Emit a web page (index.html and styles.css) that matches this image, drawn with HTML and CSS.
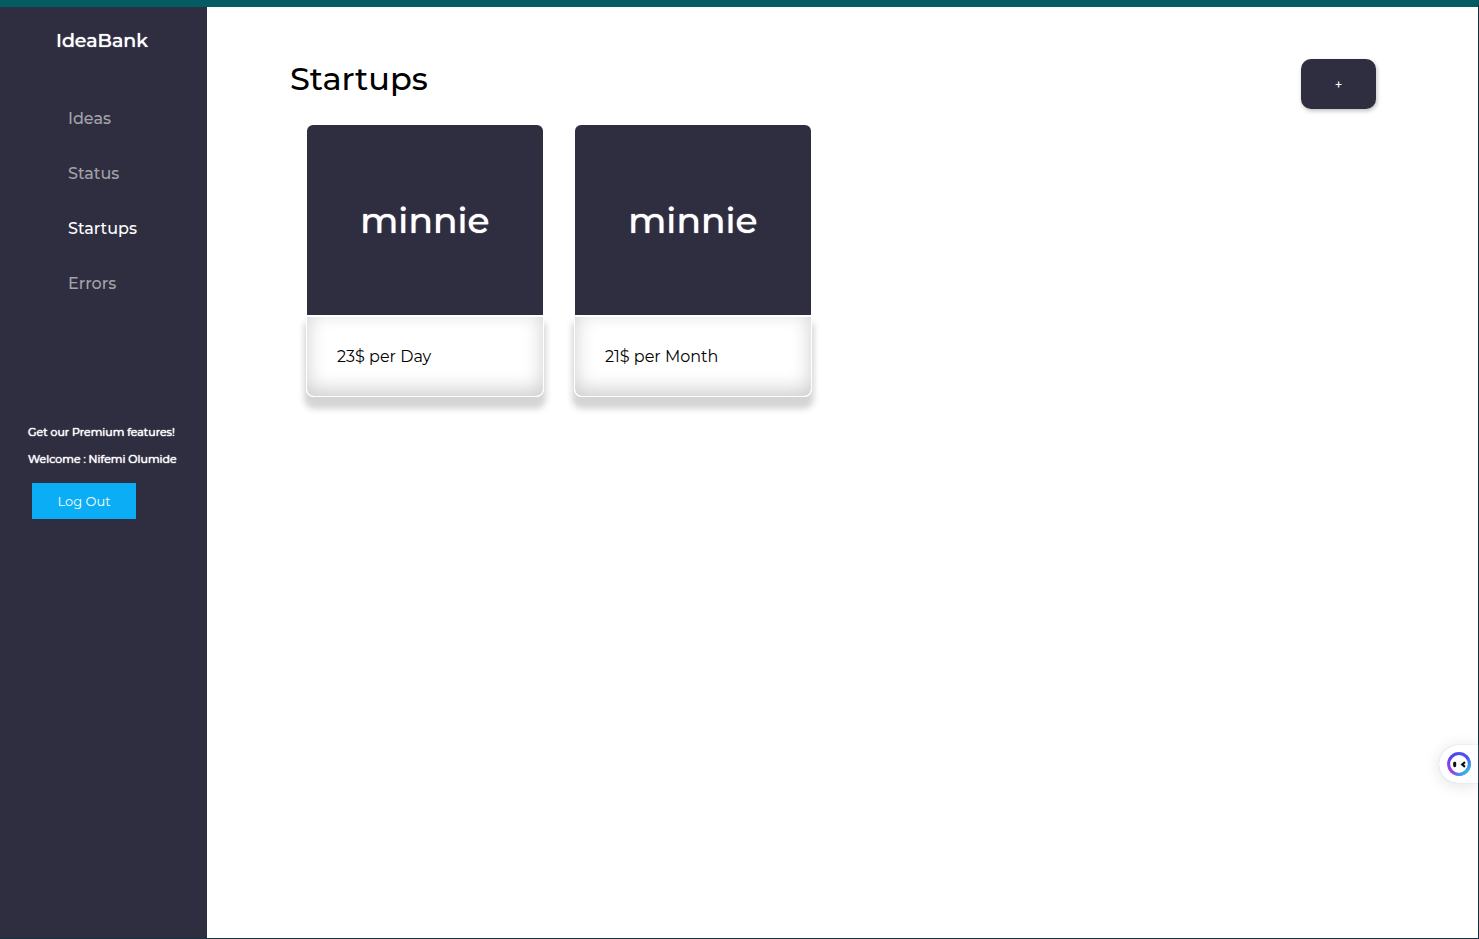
FILE: index.html
```html
<!DOCTYPE html>
<html lang="en">
<head>
    <meta charset="UTF-8">
    <meta name="viewport" content="width=device-width, initial-scale=1.0">
    <title>IdeaBank - Startups</title>
    <link rel="stylesheet" href="styles.css">
</head>
<body>
    <aside class="sidebar">
        <h2 class="logo">IdeaBank</h2>
        <nav class="menu">
            <a href="#ideas">Ideas</a>
            <a href="#status">Status</a>
            <a href="#startups" class="active">Startups</a>
            <a href="#errors">Errors</a>
        </nav>
        <div class="account">
            <p>Get our Premium features!</p>
            <p>Welcome : Nifemi Olumide</p>
            <button type="button" class="logout">Log Out</button>
        </div>
    </aside>

    <main class="content">
        <header class="content-header">
            <h1>Startups</h1>
            <button type="button" class="add">+</button>
        </header>

        <section class="cards">
            <article class="card">
                <div class="card-title">minnie</div>
                <div class="card-body">23$ per Day</div>
            </article>
            <article class="card">
                <div class="card-title">minnie</div>
                <div class="card-body">21$ per Month</div>
            </article>
        </section>
    </main>

    <button type="button" class="assistant" aria-label="Assistant">
        <svg width="24" height="24" viewBox="0 0 24 24">
            <defs>
                <linearGradient id="ring" x1="0.1" y1="0.9" x2="0.9" y2="0.3">
                    <stop offset="0" stop-color="#a03ee8"/>
                    <stop offset="0.5" stop-color="#4b45ee"/>
                    <stop offset="1" stop-color="#4a50f0"/>
                </linearGradient>
                <linearGradient id="glow" x1="0.4" y1="0.4" x2="0.9" y2="0.9">
                    <stop offset="0.3" stop-color="#2fc4e6" stop-opacity="0"/>
                    <stop offset="1" stop-color="#2fc4e6"/>
                </linearGradient>
            </defs>
            <circle cx="12" cy="12" r="10.4" fill="#fff" stroke="url(#ring)" stroke-width="3"/>
            <circle cx="12" cy="12" r="10.4" fill="none" stroke="url(#glow)" stroke-width="3"/>
            <rect x="6.2" y="9.8" width="3" height="5.4" rx="1.4" fill="#111"/>
            <path d="M18 10.2 L15.2 12.5 L18 14.8" fill="none" stroke="#111" stroke-width="2.2"/>
        </svg>
    </button>
</body>
</html>
```
FILE: styles.css
```css
* {
    box-sizing: border-box;
}
body {
    margin: 0;
    min-height: 100vh;
    display: flex;
    font-family: Montserrat, Inter, sans-serif;
    font-size: 16px;
    color: #000;
    background-color: #fff;
    border-top: 7px solid #045b62;
    border-right: 1px solid #17323f;
    border-bottom: 1px solid #17323f;
}
h1, h2, p {
    margin: 0;
}
button {
    font-family: inherit;
    border: none;
    cursor: pointer;
}

/* Sidebar */
.sidebar {
    width: 14%;
    min-width: 200px;
    flex-shrink: 0;
    background-color: #2f2e41;
    color: #fff;
}
.logo {
    padding: 22px 0 0 56px;
    font-size: 19px;
    line-height: 24px;
    font-weight: 500;
    text-shadow: 0 0 1px #fff;
}
.menu {
    display: flex;
    flex-direction: column;
    gap: 31px;
    padding: 54px 0 0 68px;
}
.menu a {
    color: #a3a2aa;
    line-height: 24px;
    font-weight: 500;
    text-decoration: none;
}
.menu a.active {
    color: #fff;
}
.account {
    padding: 127px 0 0 28px;
}
.account p {
    margin-bottom: 9px;
    font-size: 11px;
    line-height: 18px;
    font-weight: 400;
    text-shadow: 0 0 1px #fff, 0 0 1px #fff;
}
.logout {
    display: block;
    margin: 15px 0 0 4px;
    width: 104px;
    height: 36px;
    background-color: #0badf5;
    color: #fff;
    font-size: 13px;
}

/* Content */
.content {
    flex: 1;
    padding: 52px 102px 40px 83px;
}
.content-header {
    display: flex;
    justify-content: space-between;
    align-items: flex-start;
}
h1 {
    font-size: 32px;
    line-height: 40px;
    font-weight: 500;
}
.add {
    width: 75px;
    height: 50px;
    border-radius: 10px;
    background-color: #2f2e41;
    color: #fff;
    font-size: 13px;
    font-weight: 500;
    box-shadow: 1px 2px 4px rgba(0,0,0,0.25);
}
.cards {
    display: flex;
    flex-wrap: wrap;
    gap: 30px;
    padding: 16px;
}
.card {
    width: 238px;
}
.card-title {
    display: flex;
    align-items: center;
    justify-content: center;
    height: 190px;
    margin: 0 1px;
    border-radius: 6px 6px 0 0;
    background-color: #2f2e41;
    color: #fff;
    font-size: 36px;
    font-weight: 500;
    text-shadow: 0 0 1px #fff;
}
.card-body {
    padding: 28px 30px 27px;
    border: 1px solid #fff;
    border-top-width: 2px;
    border-radius: 0 0 8px 8px;
    line-height: 24px;
    box-shadow: 0 10px 6px 2px rgba(0,0,0,0.17), inset 0 -6px 20px rgba(0,0,0,0.2);
}

/* Floating assistant tab on the window edge */
.assistant {
    position: fixed;
    right: 1px;
    top: 745px;
    width: 39px;
    height: 38px;
    padding: 0 0 0 8px;
    display: flex;
    align-items: center;
    border-radius: 19px 0 0 19px;
    background-color: #fff;
    box-shadow: 0 0 1px #aab4e0, 0 2px 16px rgba(0,0,0,0.12);
}
```
